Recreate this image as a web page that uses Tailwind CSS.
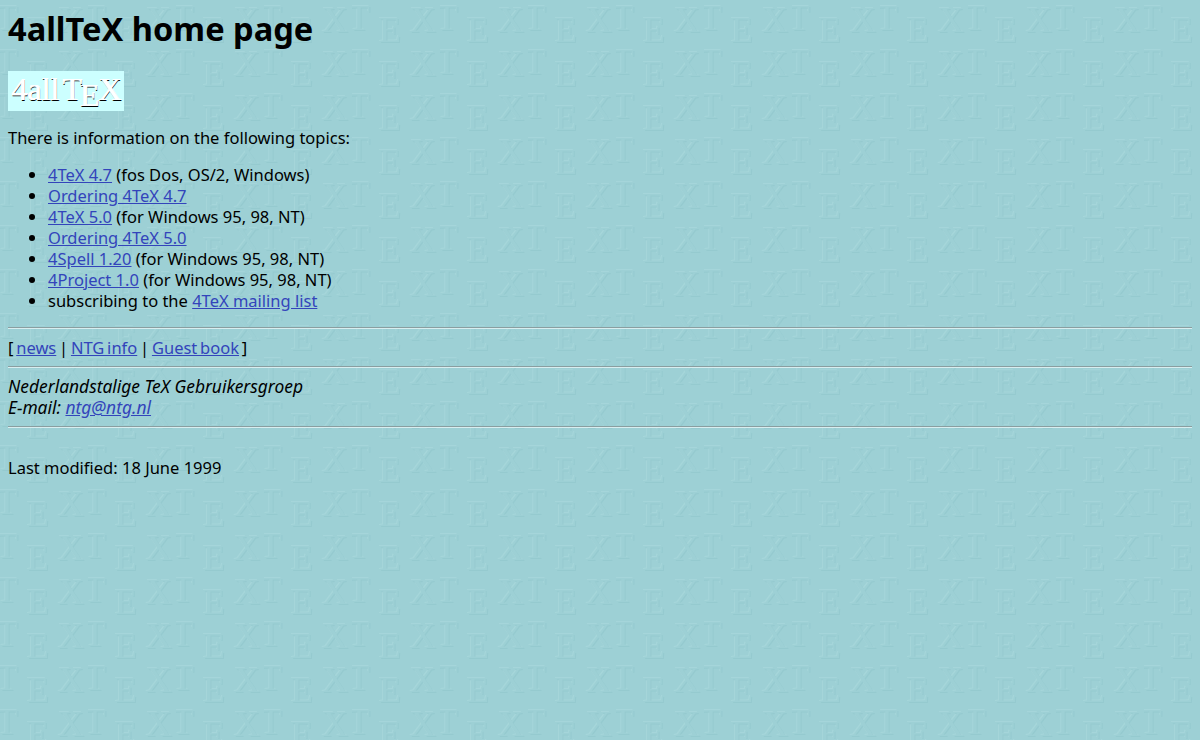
<!DOCTYPE html>
<html>
<head>
  <meta charset="UTF-8">
  <meta name="viewport" content="width=device-width, initial-scale=1.0">
  <title>4allTeX home page</title>
  <script src="https://cdn.jsdelivr.net/npm/@tailwindcss/browser@4"></script>
</head>
<body class="relative min-h-[740px] overflow-hidden bg-[#9dd0d5] font-['Noto_Sans',sans-serif] text-[16.5px] leading-[21px] text-black">
  <!-- page background tile, embossed TeX -->
  <svg class="absolute inset-0 blur-[0.5px]" width="1200" height="740" aria-hidden="true">
    <defs>
      <g id="letters" font-family="Liberation Serif" font-size="36">
        <text x="-4" y="30">T</text>
        <text x="27" y="42">E</text>
        <text x="58" y="32">X</text>
      </g>
      <pattern id="tile" width="88" height="44" patternUnits="userSpaceOnUse">
        <use href="#letters" x="-1" y="-1" fill="#b0dde0"></use>
        <use href="#letters" x="1" y="1" fill="#8cc3c9"></use>
        <use href="#letters" fill="#9dd0d5"></use>
      </pattern>
    </defs>
    <rect width="1200" height="740" fill="url(#tile)" opacity="0.45"></rect>
  </svg>

  <div class="relative p-2">
    <h1 class="mt-[2px] mb-[24px] text-[32.6px] leading-[37px] font-bold">4allTeX home page</h1>

    <div class="mb-[16px] flex h-[40px] w-[116px] items-start bg-[#ccffff] pl-[3px] font-['Liberation_Serif',serif] text-[32px] leading-[36px] text-white [text-shadow:1px_0_0_#fff,1px_1px_0_#000]">
      <span>4all</span>
      <span class="ml-[3px]">T</span>
      <span class="-ml-[2px] mt-[9px] leading-[31px]">E</span>
      <span class="-ml-[1px]">X</span>
    </div>

    <p class="mb-[16px]">There is information on the following topics:</p>

    <ul class="mb-[16px] list-disc pl-[40px]">
      <li><a href="#" class="text-[#3344bb] underline">4TeX 4.7</a> (fos Dos, OS/2, Windows)</li>
      <li><a href="#" class="text-[#3344bb] underline">Ordering 4TeX 4.7</a></li>
      <li><a href="#" class="text-[#3344bb] underline">4TeX 5.0</a> (for Windows 95, 98, NT)</li>
      <li><a href="#" class="text-[#3344bb] underline">Ordering 4TeX 5.0</a></li>
      <li><a href="#" class="text-[#3344bb] underline">4Spell 1.20</a> (for Windows 95, 98, NT)</li>
      <li><a href="#" class="text-[#3344bb] underline">4Project 1.0</a> (for Windows 95, 98, NT)</li>
      <li>subscribing to the <a href="#" class="text-[#3344bb] underline">4TeX mailing list</a></li>
    </ul>

    <hr class="border-t border-t-[#8a9ea0] border-b border-b-[#d8eef0]">
    <p class="my-[8px] [word-spacing:-1.5px]">[ <a href="#" class="text-[#3344bb] underline">news</a> | <a href="#" class="text-[#3344bb] underline">NTG info</a> | <a href="#" class="text-[#3344bb] underline">Guest book</a> ]</p>
    <hr class="border-t border-t-[#8a9ea0] border-b border-b-[#d8eef0]">
    <address class="my-[8px] text-[17.4px] italic">Nederlandstalige TeX Gebruikersgroep<br>E-mail: <a href="#" class="text-[#3344bb] underline">ntg@ntg.nl</a></address>
    <hr class="border-t border-t-[#8a9ea0] border-b border-b-[#d8eef0]">
    <p class="mt-[29px]">Last modified: 18 June 1999</p>
  </div>
</body>
</html>
